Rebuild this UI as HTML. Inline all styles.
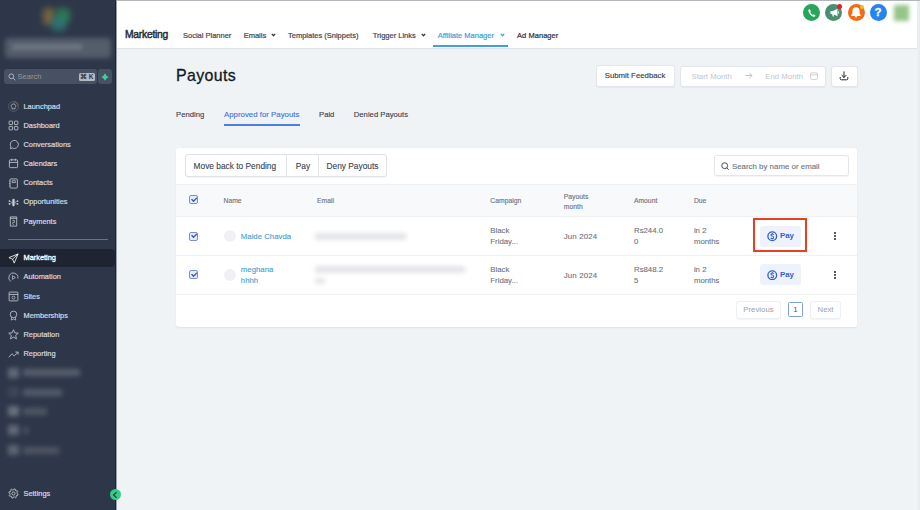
<!DOCTYPE html>
<html><head><meta charset="utf-8">
<style>
*{box-sizing:border-box;margin:0;padding:0}
html,body{width:920px;height:510px;overflow:hidden;background:#f0f3f6;font-family:"Liberation Sans",sans-serif}
.a{position:absolute;white-space:nowrap}
#side{position:absolute;left:0;top:0;width:115px;height:510px;background:#2e3749}
#sideedge{position:absolute;left:115px;top:0;width:1px;height:510px;background:#1f2430}
#sideedge2{position:absolute;left:116px;top:0;width:1px;height:510px;background:#9aa0a8}
.ni{position:absolute;left:0;width:116px;height:19px}
.ni .t{position:absolute;left:23.5px;top:50%;transform:translateY(-50%);margin-top:-1px;font-size:7.4px;color:#d5d9e0;-webkit-text-stroke:0.2px #d5d9e0}
.ni svg{position:absolute;left:8px;top:50%;margin-top:-5.5px;width:11px;height:11px}
#hdr{position:absolute;left:117px;top:1px;width:800px;height:47px;background:#fff;box-shadow:0 1px 1px rgba(0,0,0,0.06)}
.nav{position:absolute;top:30.8px;font-size:7.5px;color:#3f4652;font-weight:normal;-webkit-text-stroke:0.2px #3f4652}
.chev{position:absolute;top:33px;width:5px;height:4px}
.btn{position:absolute;background:#fff;border:1px solid #e3e7ed;border-radius:3px;box-shadow:0 0.5px 1px rgba(16,24,40,0.05)}
.th{position:absolute;font-size:6.8px;color:#6b7280;-webkit-text-stroke:0.12px #6b7280}
.td{position:absolute;font-size:7.8px;color:#6b7280;line-height:10.7px;-webkit-text-stroke:0.1px #6b7280}
.cb{position:absolute;width:9px;height:9px;border:1.2px solid #7b90d2;background:#e4edfd;border-radius:2px}
</style></head><body>
<!-- top line -->
<div class="a" style="left:0;top:0;width:920px;height:1px;background:#b3b7bc"></div>
<div class="a" style="left:917px;top:1px;width:3px;height:509px;background:linear-gradient(90deg,#eef1f4,#e8ebee)"></div>

<div id="side">
  <!-- logo blurred -->
  <div class="a" style="left:43px;top:8px;width:12px;height:17px;border-radius:4px;background:#8a7440;filter:blur(3px);opacity:.75"></div>
  <div class="a" style="left:56px;top:8px;width:14px;height:15px;border-radius:4px;background:#2f8a55;filter:blur(3px);opacity:.75"></div>
  <div class="a" style="left:52px;top:17px;width:14px;height:14px;border-radius:4px;background:#2c7f80;filter:blur(3px);opacity:.75"></div>
  <!-- account blurred -->
  <div class="a" style="left:5px;top:38px;width:106px;height:20px;background:#545d6c;filter:blur(2.5px);border-radius:3px"></div>
  <div class="a" style="left:12px;top:44px;width:70px;height:6px;background:#6d7582;filter:blur(2px)"></div>
  <!-- search -->
  <div class="a" style="left:4px;top:69px;width:93px;height:15px;background:#475163;border-radius:3px"></div>
  <svg class="a" style="left:7.5px;top:72.5px" width="8" height="8" viewBox="0 0 8 8"><circle cx="3.3" cy="3.3" r="2.4" fill="none" stroke="#aab1bc" stroke-width="1"/><path d="M5.1 5.1 L7.3 7.3" stroke="#aab1bc" stroke-width="1"/></svg>
  <div class="a" style="left:17.5px;top:72px;font-size:7.6px;color:#8f97a3">Search</div>
  <div class="a" style="left:78.5px;top:72.5px;width:16px;height:8.5px;background:#b3bac4;border-radius:1.5px"></div>
  <div class="a" style="left:80px;top:72.8px;font-size:6.6px;color:#2e3749;font-weight:bold">&#8984; K</div>
  <div class="a" style="left:97.5px;top:69px;width:14.5px;height:15px;background:#475163;border-radius:3px"></div>
  <svg class="a" style="left:101px;top:72.5px" width="8" height="8" viewBox="0 0 8 8"><path d="M4 0.3 Q5 3 7.7 4 Q5 5 4 7.7 Q3 5 0.3 4 Q3 3 4 0.3Z" fill="#3ad29a"/></svg>

  <div class="ni" style="top:97px"><svg viewBox="0 0 12 12"><circle cx="6" cy="6" r="5.3" fill="none" stroke="#5b6472" stroke-width="0.9"/><path d="M6 0.7 A5.3 5.3 0 0 1 11.2 5" fill="none" stroke="#9a6a40" stroke-width="0.9"/><path d="M4.3 7.2 Q3.2 6 3.6 4.8 Q4.2 3.2 6 3.2 Q7.8 3.2 8.4 4.8 Q8.8 6 7.7 7.2 L7.5 8.6 L4.5 8.6Z" fill="none" stroke="#c5cad3" stroke-width="0.8"/></svg><span class="t">Launchpad</span></div>
  <div class="ni" style="top:116px"><svg viewBox="0 0 12 12"><rect x="1.2" y="1.2" width="3.8" height="3.8" rx="0.6" fill="none" stroke="#c5cad3" stroke-width="0.9"/><rect x="7" y="1.2" width="3.8" height="3.8" rx="0.6" fill="none" stroke="#c5cad3" stroke-width="0.9"/><rect x="1.2" y="7" width="3.8" height="3.8" rx="0.6" fill="none" stroke="#c5cad3" stroke-width="0.9"/><rect x="7" y="7" width="3.8" height="3.8" rx="0.6" fill="none" stroke="#c5cad3" stroke-width="0.9"/></svg><span class="t">Dashboard</span></div>
  <div class="ni" style="top:135.2px"><svg viewBox="0 0 12 12"><path d="M2.5 10.5 L3.2 8.3 A4.4 4.4 0 1 1 5 9.9 Z" fill="none" stroke="#c5cad3" stroke-width="0.9"/></svg><span class="t">Conversations</span></div>
  <div class="ni" style="top:154.4px"><svg viewBox="0 0 12 12"><rect x="1.5" y="2" width="9" height="8.5" rx="1" fill="none" stroke="#c5cad3" stroke-width="0.9"/><path d="M1.5 4.8 H10.5 M4 0.8 V3 M8 0.8 V3" stroke="#c5cad3" stroke-width="0.9"/></svg><span class="t">Calendars</span></div>
  <div class="ni" style="top:173.6px"><svg viewBox="0 0 12 12"><rect x="2.2" y="1" width="8" height="10" rx="1" fill="none" stroke="#c5cad3" stroke-width="0.9"/><path d="M4.5 3 H8 V5 H4.5Z M1.2 3.5 H2.5 M1.2 6 H2.5 M1.2 8.5 H2.5" fill="none" stroke="#c5cad3" stroke-width="0.8"/></svg><span class="t">Contacts</span></div>
  <div class="ni" style="top:192.8px"><svg viewBox="0 0 12 12"><rect x="4.7" y="1.8" width="2.6" height="8.4" rx="1.2" fill="#c5cad3"/><circle cx="1.6" cy="4.4" r="0.95" fill="#c5cad3"/><circle cx="1.6" cy="7.6" r="0.95" fill="#c5cad3"/><circle cx="10.4" cy="4.4" r="0.95" fill="#c5cad3"/><circle cx="10.4" cy="7.6" r="0.95" fill="#c5cad3"/><path d="M2.4 4.8 L4.7 6 L2.4 7.2 M9.6 4.8 L7.3 6 L9.6 7.2" fill="none" stroke="#c5cad3" stroke-width="0.6"/></svg><span class="t">Opportunities</span></div>
  <div class="ni" style="top:212px"><svg viewBox="0 0 12 12"><path d="M2.5 1 H9.5 V11 H2.5Z M2.5 2.5 H9.5" fill="none" stroke="#c5cad3" stroke-width="0.9"/><path d="M5 5 H7 V7 H5.2 V9 M6 4.2 V5 M6 9 V9.8" fill="none" stroke="#c5cad3" stroke-width="0.7"/></svg><span class="t">Payments</span></div>

  <div class="a" style="left:8px;top:239px;width:100px;height:1px;background:#6b7381"></div>

  <div class="a" style="left:0;top:249px;width:115px;height:18px;background:#1e2431;border-radius:0 4px 4px 0"></div>
  <div class="ni" style="top:248.6px"><svg viewBox="0 0 12 12"><path d="M11 1 L1 5 L5 6.8 L6.8 11 Z M5 6.8 L11 1" fill="none" stroke="#fff" stroke-width="0.9" stroke-linejoin="round"/></svg><span class="t" style="color:#fff;-webkit-text-stroke:0.3px #fff">Marketing</span></div>
  <div class="ni" style="top:267.8px"><svg viewBox="0 0 12 12"><path d="M3 10.3 A5 5 0 1 1 10.8 7" fill="none" stroke="#c5cad3" stroke-width="0.9"/><path d="M4.8 4 L8 6 L4.8 8Z" fill="none" stroke="#c5cad3" stroke-width="0.8"/></svg><span class="t">Automation</span></div>
  <div class="ni" style="top:287px"><svg viewBox="0 0 12 12"><rect x="1.2" y="1.2" width="9.6" height="9.6" rx="0.8" fill="none" stroke="#c5cad3" stroke-width="0.9"/><path d="M1.2 3.8 H10.8" stroke="#c5cad3" stroke-width="0.9"/><circle cx="6" cy="7.2" r="1.6" fill="none" stroke="#c5cad3" stroke-width="0.8"/></svg><span class="t">Sites</span></div>
  <div class="ni" style="top:306.2px"><svg viewBox="0 0 12 12"><circle cx="6" cy="4.8" r="3.6" fill="none" stroke="#c5cad3" stroke-width="0.9"/><path d="M4 7.8 L3.5 11 L6 9.8 L8.5 11 L8 7.8" fill="none" stroke="#c5cad3" stroke-width="0.8"/></svg><span class="t">Memberships</span></div>
  <div class="ni" style="top:325.4px"><svg viewBox="0 0 12 12"><path d="M6 0.8 L7.5 4.2 L11.2 4.5 L8.4 7 L9.2 10.8 L6 8.8 L2.8 10.8 L3.6 7 L0.8 4.5 L4.5 4.2Z" fill="none" stroke="#c5cad3" stroke-width="0.9" stroke-linejoin="round"/></svg><span class="t">Reputation</span></div>
  <div class="ni" style="top:344.6px"><svg viewBox="0 0 12 12"><path d="M0.8 9 L4.3 5.2 L6.8 7.5 L11 3.3 M8 3.3 H11 V6.2" fill="none" stroke="#c5cad3" stroke-width="0.9"/></svg><span class="t">Reporting</span></div>

  <!-- blurred items -->
  <div class="a" style="left:8px;top:367.5px;width:11px;height:10px;background:#6a7280;filter:blur(2.4px);opacity:.85"></div>
  <div class="a" style="left:23px;top:369.0px;width:57px;height:7px;background:#5f6775;filter:blur(2.4px);opacity:.85"></div>
  <div class="a" style="left:8px;top:387px;width:11px;height:10px;background:#414a5a;filter:blur(2.4px);opacity:.85"></div>
  <div class="a" style="left:23px;top:389.0px;width:39px;height:7px;background:#5a6270;filter:blur(2.4px);opacity:.85"></div>
  <div class="a" style="left:8px;top:406px;width:11px;height:10px;background:#737b88;filter:blur(2.4px);opacity:.85"></div>
  <div class="a" style="left:23px;top:408.0px;width:24px;height:7px;background:#545c6a;filter:blur(2.4px);opacity:.85"></div>
  <div class="a" style="left:8px;top:425px;width:11px;height:10px;background:#6a7280;filter:blur(2.4px);opacity:.85"></div>
  <div class="a" style="left:23px;top:427.0px;width:6px;height:7px;background:#4c5462;filter:blur(2.4px);opacity:.85"></div>
  <div class="a" style="left:8px;top:445px;width:11px;height:10px;background:#656d7b;filter:blur(2.4px);opacity:.85"></div>
  <div class="a" style="left:23px;top:447.0px;width:36px;height:7px;background:#545c6a;filter:blur(2.4px);opacity:.85"></div>

  <div class="ni" style="top:484px"><svg viewBox="0 0 12 12"><path d="M9.90 6.00 L11.05 6.72 L10.71 7.95 L9.36 7.99 L8.76 8.76 L9.06 10.08 L7.95 10.71 L6.97 9.78 L6.00 9.90 L5.28 11.05 L4.05 10.71 L4.01 9.36 L3.24 8.76 L1.92 9.06 L1.29 7.95 L2.22 6.97 L2.10 6.00 L0.95 5.28 L1.29 4.05 L2.64 4.01 L3.24 3.24 L2.94 1.92 L4.05 1.29 L5.03 2.22 L6.00 2.10 L6.72 0.95 L7.95 1.29 L7.99 2.64 L8.76 3.24 L10.08 2.94 L10.71 4.05 L9.78 5.03Z" fill="none" stroke="#c5cad3" stroke-width="0.95" stroke-linejoin="round"/><circle cx="6" cy="6" r="1.7" fill="none" stroke="#c5cad3" stroke-width="0.95"/></svg><span class="t">Settings</span></div>
</div>
<div id="sideedge"></div><div id="sideedge2"></div>
<!-- collapse button -->
<div class="a" style="left:109.7px;top:489.1px;width:11.2px;height:11px;border-radius:50%;background:#36c98b"></div>
<svg class="a" style="left:112px;top:491px" width="6" height="8" viewBox="0 0 6 8"><path d="M4.6 1.2 L1.6 4 L4.6 6.8" fill="none" stroke="#165236" stroke-width="1.3"/></svg>

<!-- header -->
<div id="hdr"></div>
<div class="a" style="left:125px;top:28.6px;font-size:10.3px;color:#262c36;letter-spacing:-0.24px;-webkit-text-stroke:0.45px #262c36">Marketing</div>
<div class="nav" style="left:183px">Social Planner</div>
<div class="nav" style="left:243.7px">Emails</div>
<svg class="chev" style="left:270.5px" viewBox="0 0 5 4"><path d="M0.8 0.9 L2.5 2.7 L4.2 0.9" fill="none" stroke="#30363f" stroke-width="1.3"/></svg>
<div class="nav" style="left:288px">Templates (Snippets)</div>
<div class="nav" style="left:372.7px">Trigger Links</div>
<svg class="chev" style="left:420.5px" viewBox="0 0 5 4"><path d="M0.8 0.9 L2.5 2.7 L4.2 0.9" fill="none" stroke="#30363f" stroke-width="1.3"/></svg>
<div class="nav" style="left:437.8px;color:#44a0d8;-webkit-text-stroke:0.2px #44a0d8">Affiliate Manager</div>
<svg class="chev" style="left:499.5px" viewBox="0 0 5 4"><path d="M0.8 0.9 L2.5 2.7 L4.2 0.9" fill="none" stroke="#44a0d8" stroke-width="1.3"/></svg>
<div class="a" style="left:433px;top:45px;width:75px;height:1.6px;background:#44a0d8"></div>
<div class="nav" style="left:517px;color:#30363f;-webkit-text-stroke:0.22px #30363f;letter-spacing:0.05px">Ad Manager</div>

<!-- top right icons -->
<div class="a" style="left:802.8px;top:3.8px;width:17px;height:17px;border-radius:50%;background:#28a55b"></div>
<svg class="a" style="left:806.5px;top:7.5px" width="10" height="10" viewBox="0 0 10 10"><path d="M2.2 1.2 Q1.2 1.6 1.3 2.8 Q1.8 5.6 4.4 7.8 Q6.6 9.2 7.8 8.6 L8.6 7.8 L6.9 6.3 L5.9 6.9 Q4.2 5.9 3.3 4.2 L3.9 3.2 L2.6 1.2Z" fill="#fff"/></svg>
<div class="a" style="left:825.3px;top:3.8px;width:17px;height:17px;border-radius:50%;background:#4a8f71"></div>
<svg class="a" style="left:828.5px;top:7px" width="11" height="11" viewBox="0 0 11 11"><path d="M1.5 4 H4 L8.5 1.8 V9.2 L4 7 H1.5Z M3 7 L3.8 9.5 H5 L4.6 7.2" fill="#fff"/><path d="M9.6 4.5 V6.5" stroke="#fff" stroke-width="0.9"/></svg>
<div class="a" style="left:836.8px;top:3.6px;width:5.4px;height:5.4px;border-radius:50%;background:#ea1c24"></div>
<div class="a" style="left:847.8px;top:3.8px;width:17px;height:17px;border-radius:50%;background:#f36b14"></div>
<svg class="a" style="left:851.3px;top:6.6px" width="10" height="11" viewBox="0 0 10 11"><path d="M5 0.8 Q2 0.8 2 4.2 V6.8 L0.8 8.4 H9.2 L8 6.8 V4.2 Q8 0.8 5 0.8Z" fill="#fff" stroke="#fff" stroke-width="1.2" stroke-linejoin="round"/><path d="M3.9 9.8 H6.1" stroke="#fff" stroke-width="1.1"/></svg>
<div class="a" style="left:859.6px;top:4.6px;width:4px;height:4px;border-radius:50%;background:#f5b82a"></div>
<div class="a" style="left:870px;top:3.8px;width:17px;height:17px;border-radius:50%;background:#2684f0"></div>
<div class="a" style="left:874.6px;top:6.2px;font-size:11.5px;font-weight:bold;color:#fff;-webkit-text-stroke:0.3px #fff">?</div>
<div class="a" style="left:894px;top:5px;width:15px;height:16px;background:#96c489;filter:blur(2.3px)"></div>

<!-- page title -->
<div class="a" style="left:176px;top:67.1px;font-size:15.9px;letter-spacing:0.4px;color:#111827;-webkit-text-stroke:0.3px #111827">Payouts</div>
<!-- tabs -->
<div class="a" style="left:176px;top:110px;font-size:7.7px;color:#374151;-webkit-text-stroke:0.12px #374151">Pending</div>
<div class="a" style="left:224px;top:110px;font-size:7.85px;color:#3f72df;-webkit-text-stroke:0.12px #3f72df">Approved for Payouts</div>
<div class="a" style="left:224px;top:124.2px;width:76px;height:1.7px;background:#4c7ee6"></div>
<div class="a" style="left:319px;top:110px;font-size:7.7px;color:#374151;-webkit-text-stroke:0.12px #374151">Paid</div>
<div class="a" style="left:353.8px;top:110px;font-size:7.7px;color:#374151;-webkit-text-stroke:0.12px #374151">Denied Payouts</div>

<!-- right buttons -->
<div class="btn" style="left:596px;top:65px;width:79px;height:21.5px"></div>
<div class="a" style="left:604.7px;top:70.8px;font-size:7.8px;color:#374151;-webkit-text-stroke:0.15px #374151">Submit Feedback</div>
<div class="btn" style="left:679.5px;top:65.5px;width:146px;height:21px"></div>
<div class="a" style="left:691.5px;top:71.5px;font-size:7.8px;color:#c0c5cc">Start Month</div>
<svg class="a" style="left:745px;top:72px" width="8" height="7" viewBox="0 0 8 7"><path d="M0.5 3.5 H7 M4.3 0.8 L7 3.5 L4.3 6.2" fill="none" stroke="#b5bac2" stroke-width="0.9"/></svg>
<div class="a" style="left:765.3px;top:71.5px;font-size:7.8px;color:#c0c5cc">End Month</div>
<svg class="a" style="left:810px;top:72px" width="8" height="8" viewBox="0 0 8 8"><rect x="0.6" y="0.8" width="6.8" height="6.6" rx="0.8" fill="none" stroke="#c0c5cc" stroke-width="0.8"/><path d="M0.6 2.8 H7.4" stroke="#c0c5cc" stroke-width="0.8"/></svg>
<div class="btn" style="left:830.5px;top:65.5px;width:27.3px;height:21px"></div>
<svg class="a" style="left:839px;top:70.5px" width="10" height="10" viewBox="0 0 10 10"><path d="M5 0.8 V6.4 M2.9 4.3 L5 6.4 L7.1 4.3" fill="none" stroke="#1f2937" stroke-width="1" stroke-linecap="round" stroke-linejoin="round"/><path d="M1.2 6.4 V7.6 Q1.2 8.8 2.4 8.8 H7.6 Q8.8 8.8 8.8 7.6 V6.4" fill="none" stroke="#1f2937" stroke-width="1" stroke-linecap="round"/></svg>

<!-- card -->
<div class="a" style="left:176px;top:147.5px;width:681px;height:179.5px;background:#fff;border-radius:3px;box-shadow:0 0.5px 1.5px rgba(0,0,0,0.08)"></div>
<!-- button group -->
<div class="btn" style="left:185px;top:154.2px;width:202px;height:23px;border-color:#dfe3e9"></div>
<div class="a" style="left:286.2px;top:155px;width:1px;height:21.5px;background:#e3e7ed"></div>
<div class="a" style="left:317.6px;top:155px;width:1px;height:21.5px;background:#e3e7ed"></div>
<div class="a" style="left:193.6px;top:161px;font-size:8.35px;color:#374151;-webkit-text-stroke:0.1px #374151">Move back to Pending</div>
<div class="a" style="left:295.7px;top:161px;font-size:8.35px;color:#374151;-webkit-text-stroke:0.1px #374151">Pay</div>
<div class="a" style="left:326.5px;top:161px;font-size:8.35px;color:#374151;-webkit-text-stroke:0.1px #374151">Deny Payouts</div>
<!-- search -->
<div class="btn" style="left:713.5px;top:155.2px;width:135px;height:21.2px"></div>
<svg class="a" style="left:720.8px;top:162px" width="8.5" height="8.5" viewBox="0 0 9 9"><circle cx="3.9" cy="3.9" r="3.1" fill="none" stroke="#374151" stroke-width="1"/><path d="M6.1 6.1 L8.2 8.2" stroke="#374151" stroke-width="1"/></svg>
<div class="a" style="left:731.9px;top:161.8px;font-size:7.9px;color:#6b7280;-webkit-text-stroke:0.1px #6b7280">Search by name or email</div>

<!-- table header -->
<div class="a" style="left:176px;top:184px;width:681px;height:33px;background:#f8f9fb;border-top:1px solid #eef0f3;border-bottom:1px solid #eef0f3"></div>
<div class="cb" style="left:189.1px;top:195.1px"></div>
<svg class="a" style="left:190.5px;top:197.4px" width="6.5" height="5.5" viewBox="0 0 6.5 5.5"><path d="M0.9 2.6 L2.5 4.2 L5.6 1.2" fill="none" stroke="#3658c4" stroke-width="1.35" stroke-linecap="round" stroke-linejoin="round"/></svg>
<div class="th" style="left:223.5px;top:196.5px">Name</div>
<div class="th" style="left:317px;top:196.5px">Email</div>
<div class="th" style="left:490.3px;top:196.5px">Campaign</div>
<div class="th" style="left:563.8px;top:191.5px;line-height:10px;white-space:normal">Payouts<br>month</div>
<div class="th" style="left:633.9px;top:196.5px">Amount</div>
<div class="th" style="left:693.9px;top:196.5px">Due</div>

<!-- row borders -->
<div class="a" style="left:176px;top:255px;width:681px;height:1px;background:#eef0f3"></div>
<div class="a" style="left:176px;top:294px;width:681px;height:1px;background:#eef0f3"></div>

<!-- row 1 -->
<div class="cb" style="left:189.2px;top:231.7px"></div>
<svg class="a" style="left:190.5px;top:233.2px" width="6.5" height="5.5" viewBox="0 0 6.5 5.5"><path d="M0.9 2.6 L2.5 4.2 L5.6 1.2" fill="none" stroke="#3658c4" stroke-width="1.35" stroke-linecap="round" stroke-linejoin="round"/></svg>
<div class="a" style="left:223.8px;top:230px;width:12px;height:12px;border-radius:50%;background:#eff1f4"></div>
<div class="td" style="left:240.8px;top:231.8px;color:#48a0d4;-webkit-text-stroke:0.12px #48a0d4">Malde Chavda</div>
<div class="a" style="left:315px;top:232.5px;width:91px;height:7px;background:#e3e5e9;filter:blur(2px)"></div>
<div class="td" style="left:490.3px;top:226.4px">Black<br>Friday...</div>
<div class="td" style="left:563.7px;top:231.8px;letter-spacing:0.2px">Jun 2024</div>
<div class="td" style="left:634px;top:226.4px">Rs244.0<br>0</div>
<div class="td" style="left:693.9px;top:226.4px">in 2<br>months</div>

<!-- row 2 -->
<div class="cb" style="left:189.2px;top:270.3px"></div>
<svg class="a" style="left:190.5px;top:272.2px" width="6.5" height="5.5" viewBox="0 0 6.5 5.5"><path d="M0.9 2.6 L2.5 4.2 L5.6 1.2" fill="none" stroke="#3658c4" stroke-width="1.35" stroke-linecap="round" stroke-linejoin="round"/></svg>
<div class="a" style="left:223.8px;top:268.8px;width:12px;height:12px;border-radius:50%;background:#eff1f4"></div>
<div class="td" style="left:240.8px;top:265.1px;color:#48a0d4;-webkit-text-stroke:0.12px #48a0d4">meghana<br>hhhh</div>
<div class="a" style="left:315px;top:266px;width:150px;height:7px;background:#e3e5e9;filter:blur(2px)"></div>
<div class="a" style="left:315px;top:277.5px;width:10px;height:6px;background:#e6e8eb;filter:blur(2px)"></div>
<div class="td" style="left:490.3px;top:265.1px">Black<br>Friday...</div>
<div class="td" style="left:563.7px;top:270.6px;letter-spacing:0.2px">Jun 2024</div>
<div class="td" style="left:634px;top:265.1px">Rs848.2<br>5</div>
<div class="td" style="left:693.9px;top:265.1px">in 2<br>months</div>

<!-- pay buttons -->
<div class="a" style="left:760px;top:225.5px;width:40.5px;height:21.5px;background:#edf2fd;border-radius:3px"></div>
<svg class="a" style="left:767.3px;top:231px" width="10.5" height="10.5" viewBox="0 0 10.5 10.5"><circle cx="5.25" cy="5.25" r="4.35" fill="none" stroke="#3060d0" stroke-width="1.3"/><path d="M6.7 3.7 Q6.3 2.9 5.2 2.9 Q3.9 2.9 3.9 3.95 Q3.9 4.8 5.2 5.1 Q6.6 5.4 6.6 6.5 Q6.6 7.6 5.2 7.6 Q4 7.6 3.7 6.8 M5.25 2.1 V2.9 M5.25 7.6 V8.4" fill="none" stroke="#3060d0" stroke-width="1.05"/></svg>
<div class="a" style="left:780px;top:231.3px;font-size:7.9px;font-weight:bold;color:#2f62d6;letter-spacing:-0.1px">Pay</div>
<div class="a" style="left:753px;top:218.3px;width:54px;height:33.6px;border:2px solid #e6401f"></div>

<div class="a" style="left:760px;top:264.2px;width:40.5px;height:21.1px;background:#edf2fd;border-radius:3px"></div>
<svg class="a" style="left:767.3px;top:269.5px" width="10.5" height="10.5" viewBox="0 0 10.5 10.5"><circle cx="5.25" cy="5.25" r="4.35" fill="none" stroke="#3060d0" stroke-width="1.3"/><path d="M6.7 3.7 Q6.3 2.9 5.2 2.9 Q3.9 2.9 3.9 3.95 Q3.9 4.8 5.2 5.1 Q6.6 5.4 6.6 6.5 Q6.6 7.6 5.2 7.6 Q4 7.6 3.7 6.8 M5.25 2.1 V2.9 M5.25 7.6 V8.4" fill="none" stroke="#3060d0" stroke-width="1.05"/></svg>
<div class="a" style="left:780px;top:269.8px;font-size:7.9px;font-weight:bold;color:#2f62d6;letter-spacing:-0.1px">Pay</div>

<!-- kebabs -->
<div class="a" style="left:834.2px;top:232.2px;width:1.8px;height:1.8px;border-radius:50%;background:#1f2937;box-shadow:0 3px 0 #1f2937,0 6px 0 #1f2937"></div>
<div class="a" style="left:834.2px;top:271px;width:1.8px;height:1.8px;border-radius:50%;background:#1f2937;box-shadow:0 3px 0 #1f2937,0 6px 0 #1f2937"></div>

<!-- pagination -->
<div class="btn" style="left:736px;top:300.7px;width:44.5px;height:18.2px;border-color:#eef0f3"></div>
<div class="a" style="left:743.3px;top:305.2px;font-size:7.8px;color:#9aa1ab">Previous</div>
<div class="a" style="left:788.2px;top:302.2px;width:14.7px;height:14.4px;border:1px solid #7f9fe2;border-radius:1.5px;background:#fff"></div>
<div class="a" style="left:793.2px;top:305.2px;font-size:7.8px;color:#4b5563">1</div>
<div class="btn" style="left:810.2px;top:300.7px;width:31.2px;height:18.2px;border-color:#eef0f3"></div>
<div class="a" style="left:817.5px;top:305.2px;font-size:7.8px;color:#9aa1ab">Next</div>
</body></html>
